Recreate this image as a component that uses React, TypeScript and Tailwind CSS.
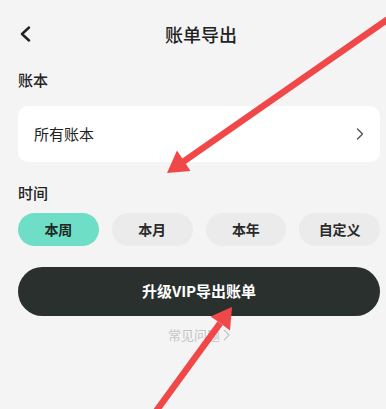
import React from "react";

const font = { fontFamily: '"Noto Sans CJK SC", "Noto Sans", sans-serif' };

export default function App() {
  const pills = ["本周", "本月", "本年", "自定义"];
  return (
    <div className="relative w-[386px] h-[409px] overflow-hidden bg-[#f4f4f4]" style={font}>
      <div className="flex flex-col pl-[18px] pr-[6px]">
        <div className="relative h-[68px] flex items-center justify-center">
          <svg className="absolute left-[1px] top-[26px]" width="14" height="16" viewBox="0 0 14 16">
            <path d="M10 1.5 L3 8 L10 14.5" fill="none" stroke="#222" strokeWidth="2.4" strokeLinecap="round" strokeLinejoin="round" />
          </svg>
          <span className="text-[18px] font-medium text-[#222] ml-[4px]">账单导出</span>
        </div>
        <div className="h-[24px] flex items-center text-[15px] font-medium text-[#222]">账本</div>
        <div className="mt-[14px] h-[56px] rounded-[10px] bg-white flex items-center justify-between pl-[16px] pr-[16px]">
          <span className="text-[15px] text-[#222]">所有账本</span>
          <svg width="8" height="12" viewBox="0 0 8 12">
            <path d="M1.5 1 L6.5 6 L1.5 11" fill="none" stroke="#555" strokeWidth="1.4" strokeLinecap="round" strokeLinejoin="round" />
          </svg>
        </div>
        <div className="mt-[19px] h-[24px] flex items-center text-[15px] font-medium text-[#222]">时间</div>
        <div className="mt-[8px] grid grid-cols-4 gap-[13px]">
          {pills.map((p, i) => (
            <div
              key={p}
              className={
                i === 0
                  ? "h-[33px] rounded-full bg-[#6fdec6] flex items-center justify-center text-[14px] font-semibold text-[#1f2a25]"
                  : "h-[33px] rounded-full bg-[#ebebeb] flex items-center justify-center text-[14px] font-semibold text-[#2a2a2a]"
              }
            >
              {p}
            </div>
          ))}
        </div>
        <div className="mt-[21px] h-[49px] rounded-full bg-[#2a302d] flex items-center justify-center text-[15px] font-bold text-white">
          升级VIP导出账单
        </div>
        <div className="mt-[9px] h-[20px] flex items-center justify-center gap-[3px] text-[13px] text-[#c4c4c4]">
          <span>常见问题</span>
          <svg width="7" height="12" viewBox="0 0 7 12">
            <path d="M1 1 L6 6 L1 11" fill="none" stroke="#c4c4c4" strokeWidth="1.2" />
          </svg>
        </div>
      </div>
      <svg className="absolute left-0 top-0 pointer-events-none" width="386" height="409" viewBox="0 0 386 409">
        <g stroke="#f04848" strokeWidth="6.5" strokeLinecap="butt" fill="none">
          <line x1="394" y1="15" x2="183.4" y2="161.6" />
          <line x1="154" y1="414" x2="220.2" y2="323.1" />
        </g>
        <g fill="#f04848">
          <polygon points="167,173 190.5,171 184,161 177,150.5" />
          <polygon points="232,307 230,330.5 220.2,323.1 210.5,316.5" />
        </g>
      </svg>
    </div>
  );
}
